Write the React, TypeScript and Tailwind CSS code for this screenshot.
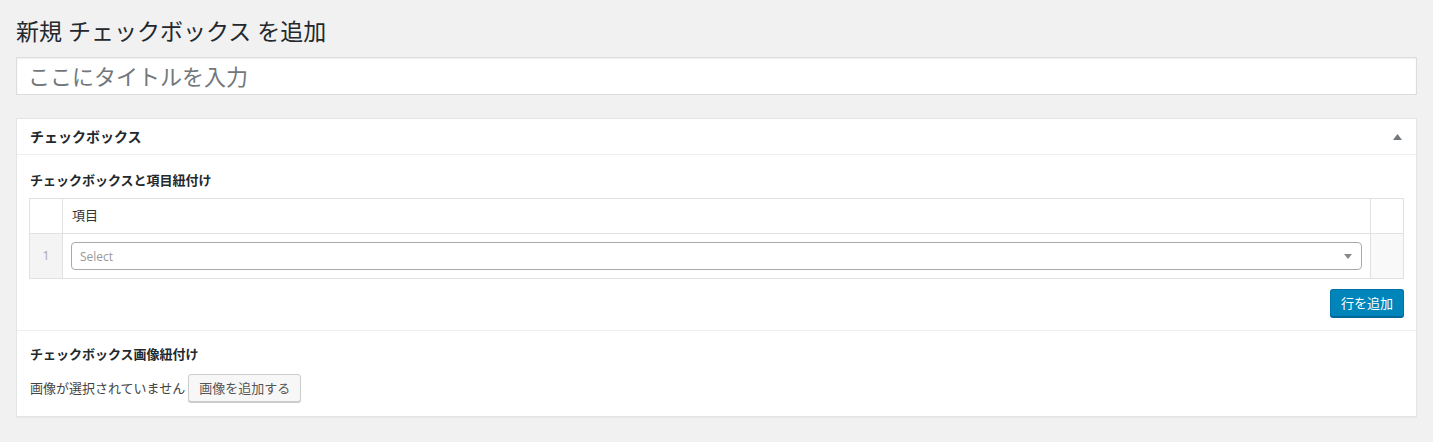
const font = { fontFamily: '"Open Sans", "Noto Sans CJK JP", sans-serif' };

function ChevronUp() {
  return (
    <svg width="9" height="6" viewBox="0 0 9 6" className="fill-[#72777c]">
      <path d="M0 6 L4.5 0 L9 6 Z" />
    </svg>
  );
}

function SelectBox() {
  return (
    <div className="flex items-center justify-between h-[28px] border border-[#aaa] rounded-[4px] bg-white pl-[8px] pr-[9px]">
      <span className="text-[12px] leading-[26px] pt-[2px] text-[#999]">Select</span>
      <svg width="8" height="5" viewBox="0 0 8 5" className="fill-[#888]">
        <path d="M0 0 L8 0 L4 5 Z" />
      </svg>
    </div>
  );
}

export default function App() {
  return (
    <div className="min-h-screen bg-[#f1f1f1] px-4 pt-4 text-[#444]" style={font}>
      <h1 className="text-[23px] leading-[30px] font-normal text-[#23282d]">
        新規 チェックボックス を追加
      </h1>

      <div className="mt-[11px] h-[38px] bg-white border border-[#ddd] shadow-[inset_0_1px_2px_rgba(0,0,0,0.07)] flex items-center pl-[11px]">
        <span className="text-[22px] leading-[30px] text-[#72777c]">ここにタイトルを入力</span>
      </div>

      <div className="mt-[23px] bg-white border border-[#e5e5e5] shadow-[0_1px_1px_rgba(0,0,0,0.04)]">
        <div className="h-[36px] border-b border-[#eee] flex items-center justify-between pl-[13px] pr-[14px]">
          <h2 className="text-[14px] font-bold text-[#23282d] leading-[20px]">チェックボックス</h2>
          <ChevronUp />
        </div>

        <div className="px-[12px] pt-[15px] pb-[13px]">
          <p className="pl-[1px] text-[13px] leading-[20px] font-bold text-[#23282d]">
            チェックボックスと項目紐付け
          </p>
          <table className="mt-[8px] w-full border-collapse border border-[#e1e1e1] text-[13px]">
            <thead>
              <tr className="h-[35px]">
                <th className="w-[33px] border border-[#e1e1e1]"></th>
                <th className="border border-[#e1e1e1] text-left font-normal pl-[9px] text-[#333]">項目</th>
                <th className="w-[33px] border border-[#e1e1e1]"></th>
              </tr>
            </thead>
            <tbody>
              <tr className="h-[45px]">
                <td className="border border-[#e1e1e1] bg-[#f4f4f4] text-center text-[#aaa]">1</td>
                <td className="border border-[#e1e1e1] px-[8px]">
                  <SelectBox />
                </td>
                <td className="border border-[#e1e1e1] bg-[#f9f9f9]"></td>
              </tr>
            </tbody>
          </table>
          <div className="mt-[10px] flex justify-end">
            <button className="h-[28px] px-[10px] rounded-[3px] bg-[#0085ba] border border-[#0073aa] border-b-[#006799] shadow-[0_1px_0_#006799] text-white text-[13px] leading-[26px]">
              行を追加
            </button>
          </div>
        </div>

        <div className="border-t border-[#eee] px-[12px] pt-[13px] pb-[14px]">
          <p className="pl-[1px] text-[13px] leading-[20px] font-bold text-[#23282d]">
            チェックボックス画像紐付け
          </p>
          <div className="mt-[10px] flex items-center pl-[1px]">
            <span className="text-[13px] leading-[20px] text-[#444]">画像が選択されていません</span>
            <button className="ml-[3px] h-[28px] px-[10px] rounded-[3px] bg-[#f7f7f7] border border-[#ccc] shadow-[0_1px_0_#ccc] text-[#555] text-[13px] leading-[26px]">
              画像を追加する
            </button>
          </div>
        </div>
      </div>
    </div>
  );
}
